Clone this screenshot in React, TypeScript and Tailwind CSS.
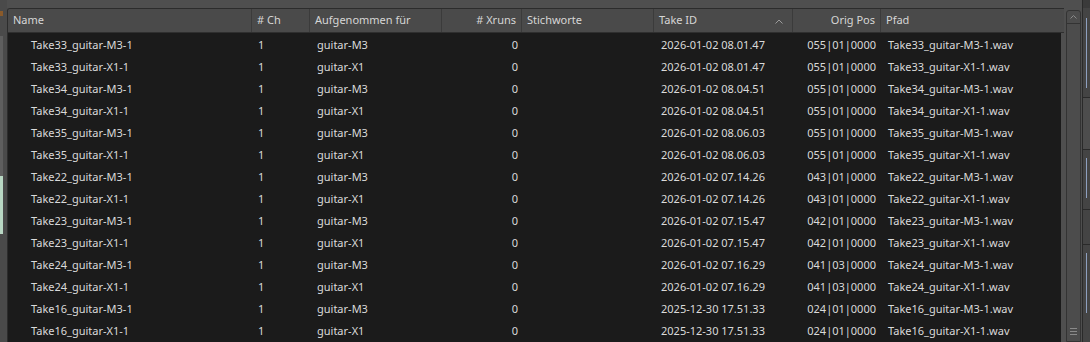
import React from "react"

type Row = {
  name: string
  ch: number
  rec: string
  xruns: number
  takeId: string
  pos: string
  path: string
}

const rows: Row[] = [
  ["33", "M3", "2026-01-02 08.01.47", "055|01|0000"],
  ["33", "X1", "2026-01-02 08.01.47", "055|01|0000"],
  ["34", "M3", "2026-01-02 08.04.51", "055|01|0000"],
  ["34", "X1", "2026-01-02 08.04.51", "055|01|0000"],
  ["35", "M3", "2026-01-02 08.06.03", "055|01|0000"],
  ["35", "X1", "2026-01-02 08.06.03", "055|01|0000"],
  ["22", "M3", "2026-01-02 07.14.26", "043|01|0000"],
  ["22", "X1", "2026-01-02 07.14.26", "043|01|0000"],
  ["23", "M3", "2026-01-02 07.15.47", "042|01|0000"],
  ["23", "X1", "2026-01-02 07.15.47", "042|01|0000"],
  ["24", "M3", "2026-01-02 07.16.29", "041|03|0000"],
  ["24", "X1", "2026-01-02 07.16.29", "041|03|0000"],
  ["16", "M3", "2025-12-30 17.51.33", "024|01|0000"],
  ["16", "X1", "2025-12-30 17.51.33", "024|01|0000"],
].map(([n, m, t, p]) => ({
  name: `Take${n}_guitar-${m}-1`,
  ch: 1,
  rec: `guitar-${m}`,
  xruns: 0,
  takeId: t,
  pos: p,
  path: `Take${n}_guitar-${m}-1.wav`,
}))

const cols = "grid grid-cols-[244px_58px_132px_80px_132px_139px_88px_1fr]"

function HeaderCell({ children, right = false, last = false }: { children?: React.ReactNode; right?: boolean; last?: boolean }) {
  return (
    <div
      className={`relative flex items-center h-full px-[5px] ${right ? "justify-end" : ""} ${
        last ? "" : "border-r border-[#3b3b3b]"
      }`}
    >
      {children}
    </div>
  )
}

export default function App() {
  return (
    <div
      className="w-[1090px] h-[342px] flex overflow-hidden bg-[#4f4f4f] text-[11px] text-[#dadada]"
      style={{ fontFamily: '"Noto Sans", "Open Sans", sans-serif' }}
    >
      {/* linker Rand mit Resten anderer Panels */}
      <div className="w-[7px] flex flex-col bg-[#4a4a4a]">
        <div className="h-[11px]" />
        <div className="h-[5px] w-[3px] bg-[#8a5a2a]" />
        <div className="h-[20px]" />
        <div className="h-[140px] w-[3px] bg-[#5e5e5e]" />
        <div className="h-[58px] w-[3px] bg-[#b9d8c4]" />
      </div>

      {/* Tabelle */}
      <div className="w-[1057px] flex flex-col pt-[8px]">
        <div className="flex-1 flex flex-col border-l border-t border-[#2c2c2c] rounded-tl-[3px] overflow-hidden">
          <div className={`${cols} h-[25px] bg-[#4a4a4a] border-b border-[#2f2f2f] text-[#d6d6d6]`}>
            <HeaderCell>Name</HeaderCell>
            <HeaderCell># Ch</HeaderCell>
            <HeaderCell>Aufgenommen für</HeaderCell>
            <HeaderCell right># Xruns</HeaderCell>
            <HeaderCell>Stichworte</HeaderCell>
            <HeaderCell>
              <span>Take ID</span>
              <svg className="absolute right-[9px] top-[10px]" width="8" height="5" viewBox="0 0 8 5">
                <path d="M0.5 4.5 L4 1 L7.5 4.5" fill="none" stroke="#9c9c9c" strokeWidth="1" />
              </svg>
            </HeaderCell>
            <HeaderCell right>Orig Pos</HeaderCell>
            <HeaderCell last>Pfad</HeaderCell>
          </div>
          <div className="flex-1 bg-[#1b1b1b] mr-[3px] pt-px">
            {rows.map((r) => (
              <div key={r.path} className={`${cols} h-[22px] items-center`}>
                <div className="pl-[23px]">{r.name}</div>
                <div className="pl-[6px]">{r.ch}</div>
                <div className="pl-[7px]">{r.rec}</div>
                <div className="text-right pr-[4px]">{r.xruns}</div>
                <div />
                <div className="pl-[7px]">{r.takeId}</div>
                <div className="text-right pr-[5px]">{r.pos}</div>
                <div className="pl-[7px]">{r.path}</div>
              </div>
            ))}
          </div>
        </div>
      </div>

      {/* Scrollbar */}
      <div className="w-[18px] pt-[10px] pl-[2px]">
        <div className="h-full w-[15px] flex flex-col border border-[#333] rounded-t-[3px] bg-[#4c4c4c]">
          <div className="h-[13px] flex items-center justify-center border-b border-[#333]">
            <svg width="7" height="4" viewBox="0 0 7 4">
              <path d="M0.5 3.5 L3.5 0.5 L6.5 3.5" fill="none" stroke="#8a8a8a" strokeWidth="1" />
            </svg>
          </div>
          <div className="flex-1 flex flex-col justify-end items-center pb-[6px]">
            <div className="flex flex-col gap-[2px]">
              <div className="w-[7px] h-px bg-[#8a8a8a]" />
              <div className="w-[7px] h-px bg-[#8a8a8a]" />
              <div className="w-[7px] h-px bg-[#8a8a8a]" />
            </div>
          </div>
        </div>
      </div>

      {/* rechter Rand: Tabs */}
      <div className="w-[8px] flex flex-col pt-[8px] bg-[#3a3a3a] border-l border-[#2a2a2a]">
        <div className="h-[90px] bg-[#444] border-b border-[#2a2a2a] flex justify-center pt-[10px]">
          <div className="w-px h-[70px] bg-[#8ea0c0]" />
        </div>
        <div className="h-[52px] bg-[#4d4d4d] border-b border-[#2a2a2a]" />
        <div className="h-[60px] bg-[#444] border-b border-[#2a2a2a] flex justify-center pt-[8px]">
          <div className="w-px h-[40px] bg-[#8ea0c0]" />
        </div>
        <div className="h-[35px] bg-[#444] border-b border-[#2a2a2a]" />
        <div className="flex-1 bg-[#444] flex justify-center pt-[8px]">
          <div className="w-px h-[60px] bg-[#8ea0c0]" />
        </div>
      </div>
    </div>
  )
}
